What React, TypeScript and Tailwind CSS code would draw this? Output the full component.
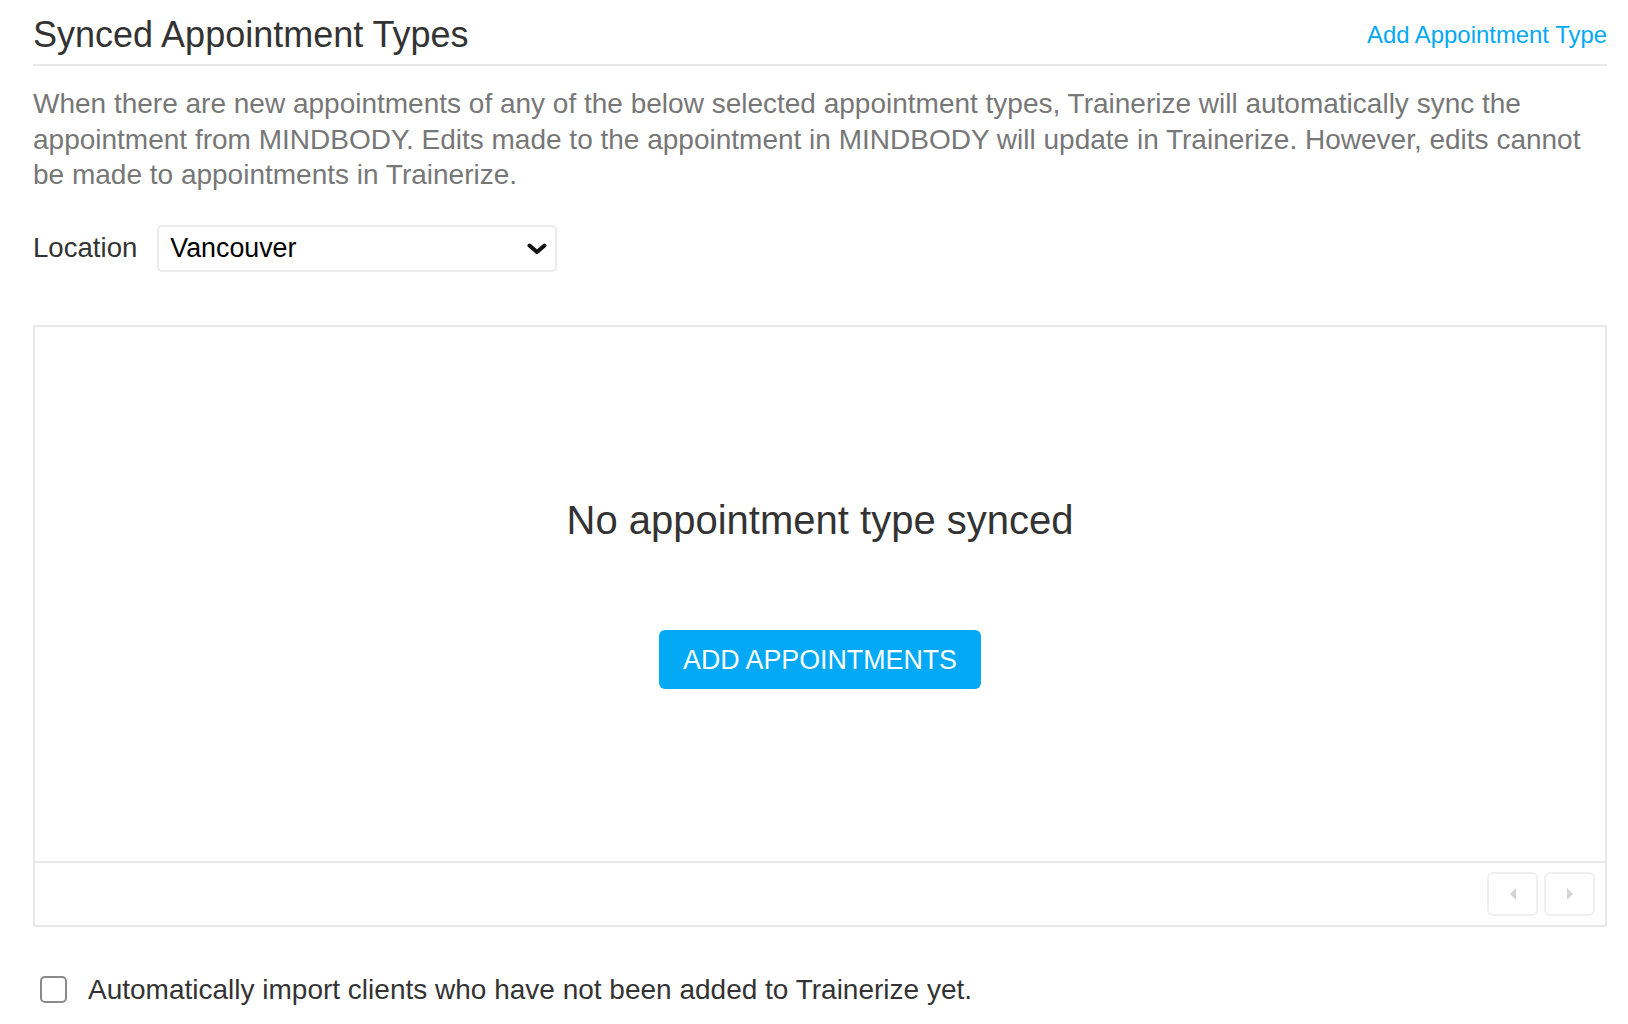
import React from "react";

export default function App() {
  return (
    <div
      className="min-h-[1024px] w-full bg-white pl-[33px] pr-[21px]"
      style={{ fontFamily: '"Liberation Sans", Arial, Helvetica, sans-serif' }}
    >
      {/* Header */}
      <div className="flex items-center justify-between border-b-2 border-[#e8e8e8] pt-[15px] pb-[9px]">
        <h1 className="text-[36px] leading-[40px] text-[#333333]">Synced Appointment Types</h1>
        <a className="cursor-pointer text-[23.9px] leading-[28px] text-[#03a9f4]">Add Appointment Type</a>
      </div>

      {/* Description */}
      <p className="mt-[20px] text-[28px] leading-[35.5px] text-[#777777]">
        When there are new appointments of any of the below selected appointment types, Trainerize will automatically sync the
        appointment from MINDBODY. Edits made to the appointment in MINDBODY will update in Trainerize. However, edits cannot
        be made to appointments in Trainerize.
      </p>

      {/* Location */}
      <div className="mt-[32px] flex items-center gap-[20px]">
        <span className="text-[27.6px] leading-[32px] text-[#333333]">Location</span>
        <div className="flex h-[47px] w-[400px] items-center justify-between rounded-[5px] border-2 border-[#ebebeb] bg-white pl-[11px] pr-[8px]">
          <span className="text-[26.8px] leading-[32px] text-black">Vancouver</span>
          <svg width="20" height="12" viewBox="0 0 20 12" className="mt-[1px]">
            <path d="M2.5 2.5 L10 9 L17.5 2.5" fill="none" stroke="#111" strokeWidth="4" strokeLinecap="round" strokeLinejoin="round" />
          </svg>
        </div>
      </div>

      {/* Panel */}
      <div className="mt-[53px] border-2 border-[#e8e8e8]">
        <div className="flex h-[534px] flex-col items-center justify-center">
          <div className="text-[40px] leading-[44px] text-[#333333]">No appointment type synced</div>
          <button className="mt-[88px] h-[59px] rounded-[6px] bg-[#03a9f4] px-[24px] text-[26.8px] leading-[32px] text-white">
            ADD APPOINTMENTS
          </button>
        </div>
        <div className="flex h-[64px] items-center justify-end gap-[6px] border-t-2 border-[#e8e8e8] pr-[10px]">
          <div className="flex h-[44px] w-[51px] items-center justify-center rounded-[6px] border-2 border-[#f0f0f0]">
            <svg width="8" height="12" viewBox="0 0 8 12">
              <path d="M7 0 L1 6 L7 12 Z" fill="#d4d4d4" />
            </svg>
          </div>
          <div className="flex h-[44px] w-[51px] items-center justify-center rounded-[6px] border-2 border-[#f0f0f0]">
            <svg width="8" height="12" viewBox="0 0 8 12">
              <path d="M1 0 L7 6 L1 12 Z" fill="#d4d4d4" />
            </svg>
          </div>
        </div>
      </div>

      {/* Checkbox */}
      <label className="mt-[46px] flex items-center gap-[21px] pl-[7px]">
        <span className="block h-[27px] w-[27px] rounded-[5px] border-2 border-[#8a8a8a] bg-white" />
        <span className="text-[28px] leading-[34px] text-[#333333]">
          Automatically import clients who have not been added to Trainerize yet.
        </span>
      </label>
    </div>
  );
}
